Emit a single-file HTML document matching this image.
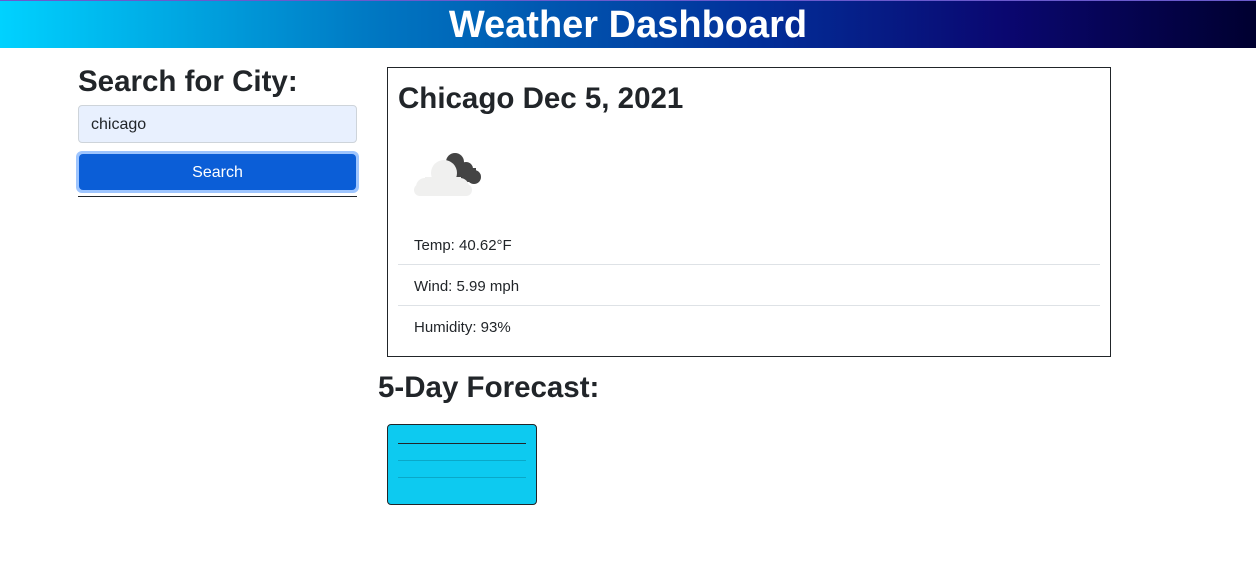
<!DOCTYPE html>
<html><head><style>
body{margin:0;width:1256px;height:564px;background:#fff;font-family:"Liberation Sans",sans-serif;color:#212529;position:relative;overflow:hidden}
.hdr{position:absolute;left:0;top:0;width:1256px;height:48px;background:linear-gradient(90deg,#00d2ff 0%,#0077c2 30%,#02309a 60%,#0a0770 80%,#000030 100%);border-top:1px solid #6a5acd;box-sizing:border-box;color:#fff;text-align:center;font-size:38px;font-weight:bold;line-height:48px}
.abs{position:absolute}
.h{font-weight:bold;font-size:29.5px}
</style></head><body>
<div class="hdr">Weather Dashboard</div>
<div class="abs h" style="left:78px;top:65px">Search for City:</div>
<div class="abs" style="left:78px;top:105px;width:279px;height:38px;background:#e8f0fe;border:1px solid #ced4da;border-radius:4px;font-size:16px;line-height:38px;padding-left:12px;box-sizing:border-box">chicago</div>
<div class="abs" style="left:76px;top:151px;width:283px;height:42px;border-radius:6px;background:#9ec5fe"></div>
<div class="abs" style="left:79px;top:154px;width:277px;height:36px;border-radius:4px;background:#0b5ed7;color:#fff;font-size:16px;line-height:38px;text-align:center">Search</div>
<div class="abs" style="left:78px;top:196px;width:279px;height:1px;background:#212529"></div>
<div class="abs" style="left:387px;top:67px;width:722px;height:288px;border:1px solid #212529"></div>
<div class="abs h" style="left:398px;top:82px">Chicago Dec 5, 2021</div>
<svg class="abs" style="left:410px;top:150px" width="80" height="50" viewBox="0 0 80 50">
<g fill="#444"><circle cx="45" cy="12" r="9"/><circle cx="56" cy="19" r="7"/><circle cx="64" cy="27" r="7"/><rect x="44" y="18" width="22" height="14"/></g>
<g fill="#f0f0ef"><circle cx="34" cy="23" r="13"/><circle cx="15" cy="37" r="9"/><circle cx="50" cy="37" r="9"/><rect x="4" y="34" width="58" height="12" rx="6"/><rect x="15" y="27" width="36" height="19"/></g>
</svg>
<div class="abs" style="left:414px;top:237px;font-size:15px">Temp: 40.62°F</div>
<div class="abs" style="left:398px;top:264px;width:702px;height:1px;background:#dee2e6"></div>
<div class="abs" style="left:414px;top:278px;font-size:15px">Wind: 5.99 mph</div>
<div class="abs" style="left:398px;top:305px;width:702px;height:1px;background:#dee2e6"></div>
<div class="abs" style="left:414px;top:319px;font-size:15px">Humidity: 93%</div>
<div class="abs h" style="left:378px;top:371px">5-Day Forecast:</div>
<div class="abs" style="left:387px;top:424px;width:148px;height:79px;background:#0dcaf0;border:1px solid #212529;border-radius:4px"></div>
<div class="abs" style="left:398px;top:443px;width:128px;height:1px;background:#212529"></div>
<div class="abs" style="left:398px;top:460px;width:128px;height:1px;background:#0aa8c8"></div>
<div class="abs" style="left:398px;top:477px;width:128px;height:1px;background:#0aa8c8"></div>
</body></html>
